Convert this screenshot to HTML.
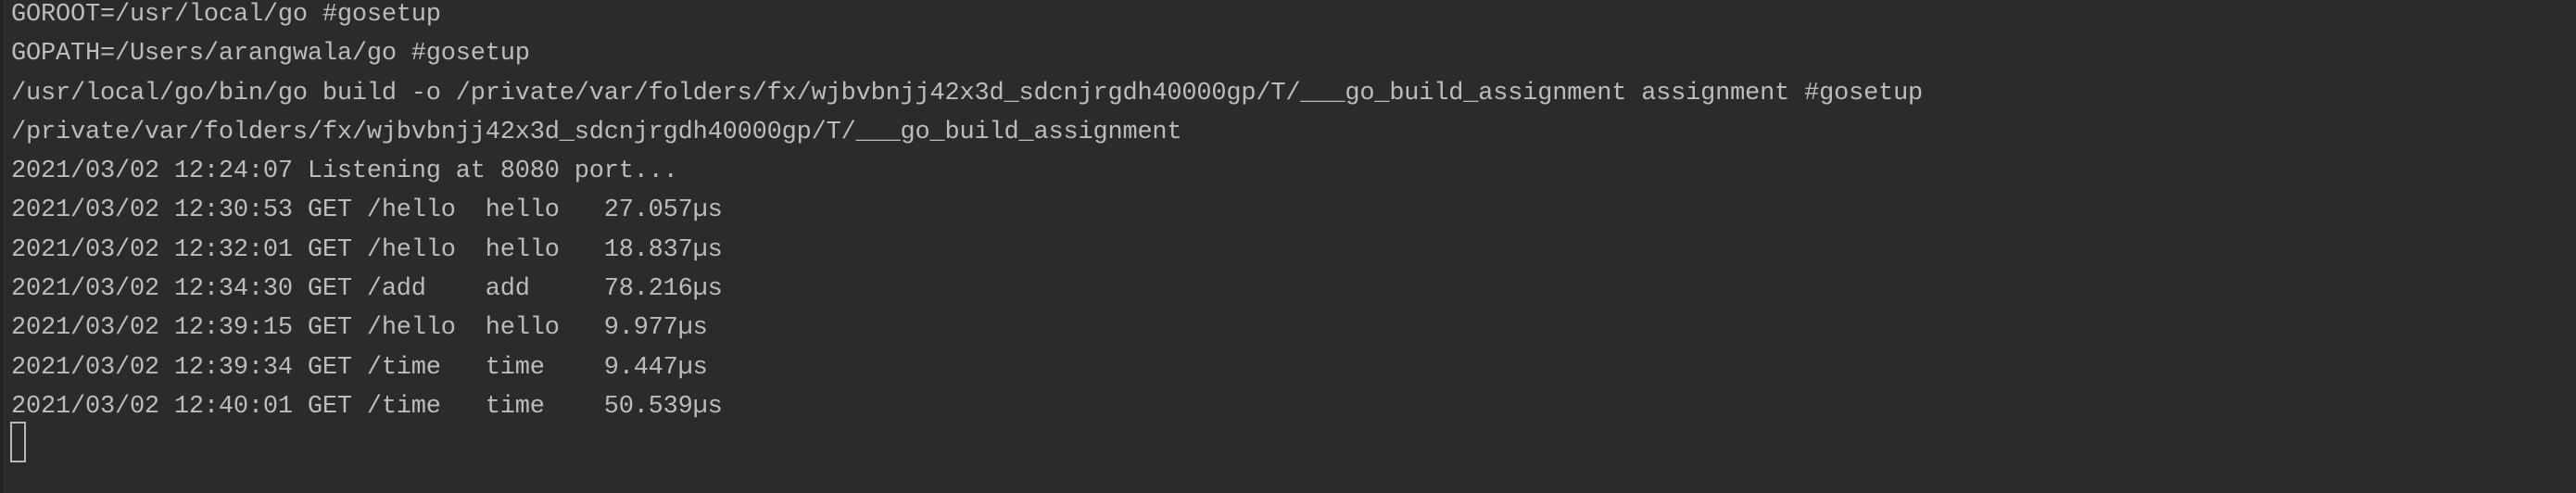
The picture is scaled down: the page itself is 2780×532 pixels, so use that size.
<!DOCTYPE html>
<html><head><meta charset="utf-8"><style>
html,body{margin:0;padding:0;}
body{width:2780px;height:532px;background:#2b2b2b;overflow:hidden;position:relative;}
.edge{position:absolute;left:0;top:0;width:3px;height:532px;background:#232323;}
pre{position:absolute;left:12px;top:-5px;margin:0;font-family:"Liberation Mono",monospace;font-size:27px;letter-spacing:-0.21px;line-height:42.3px;color:#bcbcbc;white-space:pre;}
.cur{position:absolute;left:11px;top:455px;height:40px;border:2px solid #b8b8b8;box-sizing:content-box;width:13px;}
</style></head><body>
<div class="edge"></div>
<pre>GOROOT=/usr/local/go #gosetup
GOPATH=/Users/arangwala/go #gosetup
/usr/local/go/bin/go build -o /private/var/folders/fx/wjbvbnjj42x3d_sdcnjrgdh40000gp/T/___go_build_assignment assignment #gosetup
/private/var/folders/fx/wjbvbnjj42x3d_sdcnjrgdh40000gp/T/___go_build_assignment
2021/03/02 12:24:07 Listening at 8080 port...
2021/03/02 12:30:53 GET /hello  hello   27.057µs
2021/03/02 12:32:01 GET /hello  hello   18.837µs
2021/03/02 12:34:30 GET /add    add     78.216µs
2021/03/02 12:39:15 GET /hello  hello   9.977µs
2021/03/02 12:39:34 GET /time   time    9.447µs
2021/03/02 12:40:01 GET /time   time    50.539µs</pre>
<div class="cur"></div>
</body></html>
